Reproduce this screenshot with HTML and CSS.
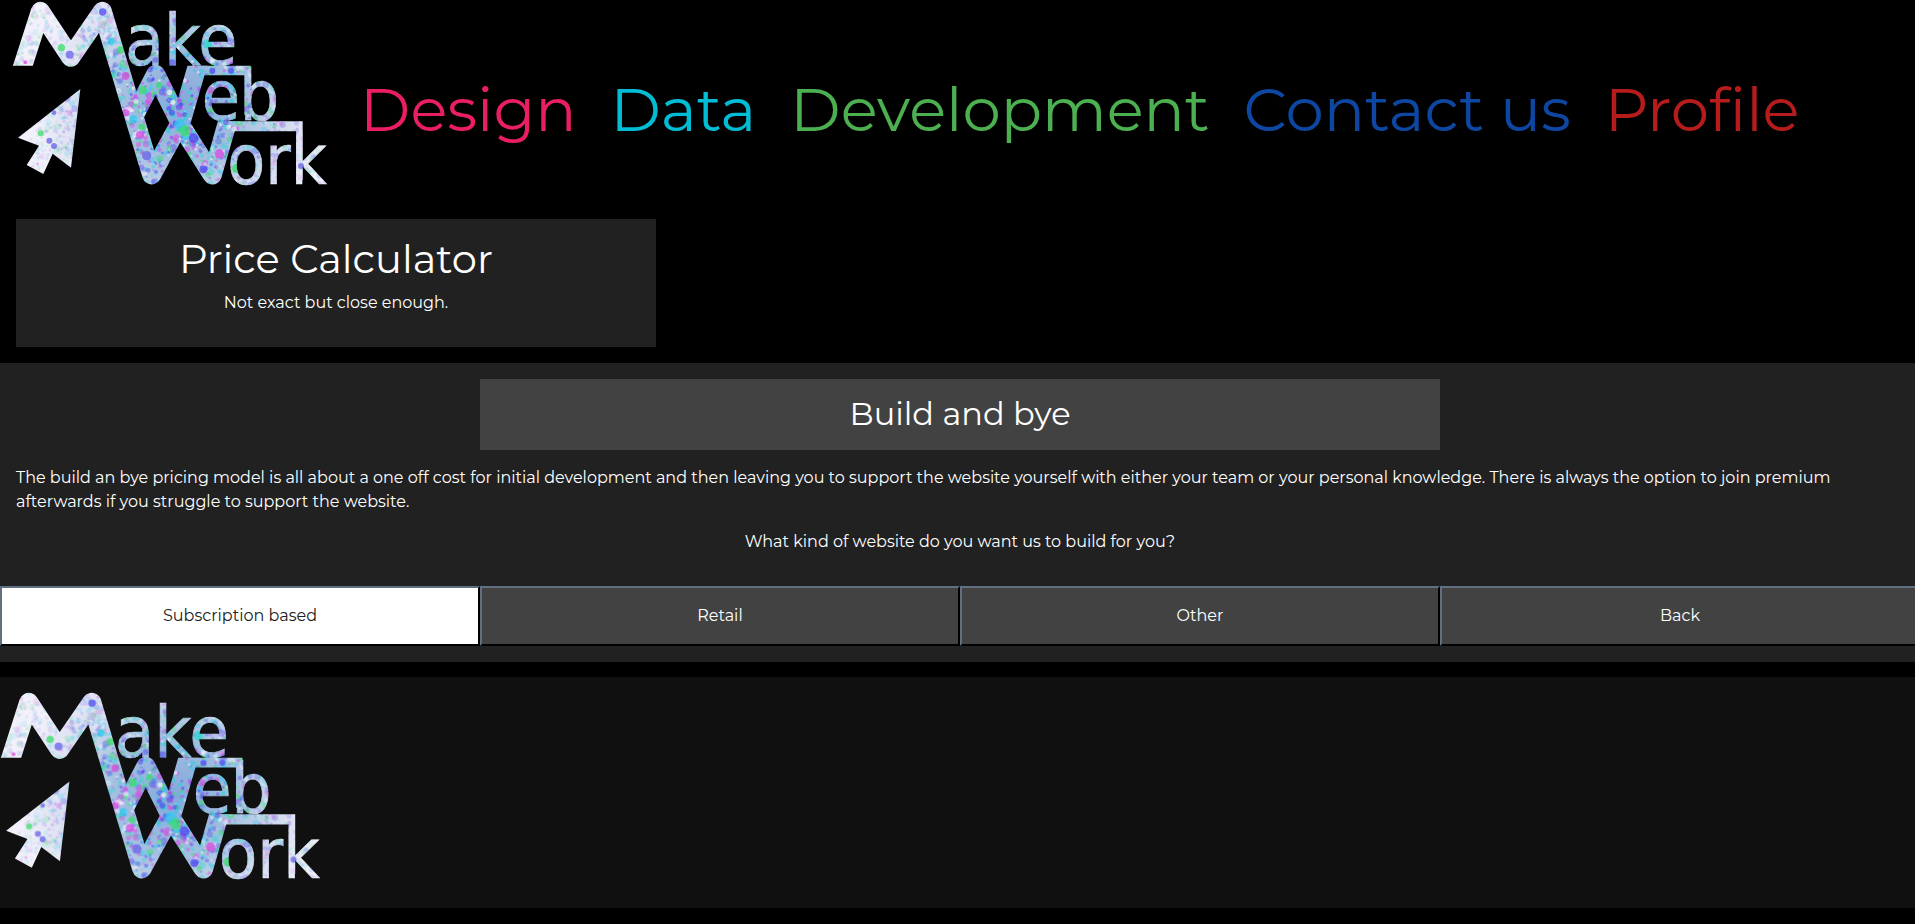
FILE: index.html
```html
<!DOCTYPE html>
<html lang="en">
<head>
<meta charset="utf-8">
<title>Make Web Work - Price Calculator</title>
<link rel="stylesheet" href="styles.css">
</head>
<body>
<svg class="defs" aria-hidden="true">
  <defs>
    <radialGradient id="base" gradientUnits="userSpaceOnUse" cx="550" cy="310" r="450">
      <stop offset="0" stop-color="#84a8dc"/>
      <stop offset="0.4" stop-color="#a4c0e0"/>
      <stop offset="0.75" stop-color="#dadff0"/>
      <stop offset="1" stop-color="#f2f0fa"/>
    </radialGradient>
    <pattern id="speckle" patternUnits="userSpaceOnUse" width="1020" height="600">
      <rect width="1020" height="600" fill="url(#base)"/>
      <g id="dots"></g>
    </pattern>
    <clipPath id="ends"><path d="M0 0H500V197H645V364H740V600H180V197H0Z"/></clipPath>
    <symbol id="logo" viewBox="36 0 960 576">
      <g clip-path="url(#ends)" fill="none" stroke="url(#speckle)" stroke-width="57" stroke-linejoin="round">
        <path d="M58 230L121 34L212 172L307 34L455 525L545 360L600 170"/>
        <path d="M400 352L467 223L548 385L637 525L690 340"/>
      </g>
      <path fill="url(#speckle)" d="M575 197H752V345H733V226H575ZM655 364H908V540H889V394H655ZM241 267L213 503L158 461L130 522L80 495L117 437L54 413Z"/>
      <g fill="url(#speckle)" stroke="url(#speckle)" stroke-width="2" class="logo-text">
        <text x="375" y="195" class="logo-make">ake</text>
        <text x="605" y="360">eb</text>
        <text x="682" y="553">ork</text>
      </g>
    </symbol>
  </defs>
</svg>

<header class="top">
  <a href="#" aria-label="Make Web Work home"><svg class="logo"><use href="#logo"/></svg></a>
  <nav class="menu">
    <a class="pink" href="#">Design</a>
    <a class="cyan" href="#">Data</a>
    <a class="green" href="#">Development</a>
    <a class="blue" href="#">Contact us</a>
    <a class="red" href="#">Profile</a>
  </nav>
</header>

<main>
  <section class="intro">
    <h1>Price Calculator</h1>
    <p>Not exact but close enough.</p>
  </section>
  <section class="model">
    <h2>Build and bye</h2>
    <p class="about">The build an bye pricing model is all about a one off cost for initial development and then leaving you to support the website yourself with either your team or your personal knowledge. There is always the option to join premium afterwards if you struggle to support the website.</p>
    <p class="question">What kind of website do you want us to build for you?</p>
    <div class="choices">
      <button class="active" type="button">Subscription based</button>
      <button type="button">Retail</button>
      <button type="button">Other</button>
      <button type="button">Back</button>
    </div>
  </section>
</main>

<footer class="bottom">
  <svg class="logo logo-large" role="img" aria-label="Make Web Work"><use href="#logo"/></svg>
</footer>
<script src="speckle.js"></script>
</body>
</html>
```
FILE: styles.css
```css
* { box-sizing: border-box; }
html { overflow-x: hidden; background: #000; }
body {
  margin: 0;
  overflow-x: hidden;
  background: #000;
  color: #fff;
  font: 400 16px/24px Montserrat, Inter, sans-serif;
}
h1, h2, p { margin: 0; }
.defs { position: absolute; width: 0; height: 0; }
.logo { display: block; width: 320px; height: 192px; }
.logo-large { width: 325px; height: 195px; }
.logo-text { font-family: "DejaVu Sans Condensed", "Open Sans", sans-serif; font-size: 207px; font-weight: 400; }
.logo-make { font-size: 212px; }

.top { display: flex; align-items: flex-start; padding-left: 12px; height: 203px; }
.menu {
  display: flex;
  gap: 34px;
  padding: 72px 0 0 28px;
  font-size: 61px;
  line-height: 74px;
  white-space: nowrap;
}
.menu a { text-decoration: none; }
.pink { color: #e91e63; }
.cyan { color: #00bcd4; }
.green { color: #4caf50; }
.blue { color: #0d47a1; }
.red { color: #b71c1c; }

/* The content grid runs slightly past the right edge of the window. */
main { width: calc(100% + 5px); }
.intro {
  width: 33.333%;
  margin: 16px;
  padding: 16px 16px 32px;
  background: #212121;
  text-align: center;
}
.intro h1 { font-size: 40px; line-height: 48px; font-weight: 400; margin-bottom: 8px; }
.model { padding: 16px 0; background: #212121; }
.model h2 {
  width: 50%;
  margin: 0 auto 16px;
  padding: 15px 16px 17px;
  background: #424242;
  font-size: 32px;
  line-height: 39px;
  font-weight: 400;
  text-align: center;
}
.about { padding: 0 16px; }
.question { padding: 16px 16px 32px; text-align: center; }
.choices { display: grid; grid-template-columns: repeat(4, 1fr); }
.choices button {
  height: 60px;
  border: 2px solid;
  border-color: #607080 #000 #000 #607080;
  background: #424242;
  color: #fff;
  font: inherit;
}
.choices .active { background: #fff; color: #212121; }

.bottom { margin: 15px 0 16px; padding: 14px 0 22px; background: #101010; }
```
FILE: speckle.js
```js
// Fills the logo pattern with paint spots; a fixed seed keeps it the same on every load.
const dots = document.getElementById("dots");
let seed = 7;
const rand = () => (seed = (seed * 16807) % 2147483647) / 2147483647;
const add = (x, y, r, color, opacity) => {
  const c = document.createElementNS("http://www.w3.org/2000/svg", "circle");
  c.setAttribute("cx", x);
  c.setAttribute("cy", y);
  c.setAttribute("r", r);
  c.setAttribute("fill", color);
  c.setAttribute("fill-opacity", opacity);
  dots.appendChild(c);
};
const colors = ["#4a48f0", "#38dc68", "#d848e0", "#30c8f0", "#6860e8", "#28d8d0", "#ffffff"];
for (let i = 0; i < 4200; i++) {
  const x = rand() * 1020;
  const y = rand() * 600;
  const near = Math.max(0, 1 - Math.hypot(x - 540, y - 310) / 400);
  const r = 3 + rand() * rand() * 9;
  add(x, y, r, colors[Math.floor(rand() * 7)], 0.12 + near * 0.6);
}
[
  [308, 36, 11, 0], [184, 143, 11, 1], [209, 164, 12, 4], [334, 124, 11, 3],
  [362, 150, 11, 1], [376, 228, 12, 2], [377, 338, 11, 2], [400, 358, 12, 3],
  [428, 270, 12, 1], [420, 405, 12, 2], [440, 467, 14, 4], [426, 381, 10, 1],
  [540, 375, 18, 3], [555, 392, 16, 1], [581, 415, 15, 0], [610, 508, 12, 0],
  [658, 462, 14, 2], [515, 190, 12, 4], [622, 132, 14, 5], [637, 213, 9, 0],
  [693, 212, 9, 0], [122, 400, 9, 1], [148, 422, 9, 4], [162, 438, 9, 4],
  [76, 187, 6, 2], [162, 338, 7, 4], [710, 505, 14, 1], [903, 498, 9, 4]
].forEach(([x, y, r, k]) => add(x, y, r, colors[k], 0.75));
```
